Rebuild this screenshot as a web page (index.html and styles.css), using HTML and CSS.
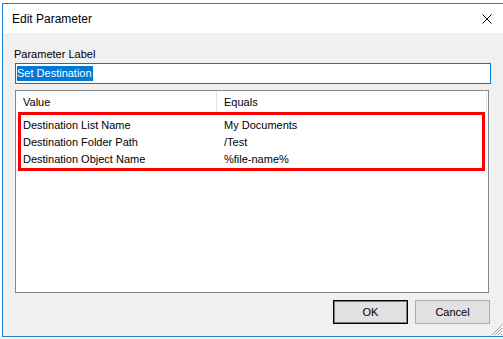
FILE: index.html
```html
<!DOCTYPE html>
<html lang="en">
<head>
  <meta charset="UTF-8" />
  <title>Edit Parameter</title>
  <link rel="stylesheet" href="styles.css">
</head>
<body>
  <div class="screen">
    <div class="window">
      <div class="titlebar">
        <span class="title">Edit Parameter</span>
        <svg class="close" width="10" height="10" viewBox="0 0 10 10">
          <path d="M0.5 0.5 L9.5 9.5 M9.5 0.5 L0.5 9.5" stroke="#000" stroke-width="1" />
        </svg>
      </div>

      <div class="client">
        <label class="field-label">Parameter Label</label>
        <div class="textbox"><span class="selected">Set Destination</span></div>

        <div class="listview">
          <div class="list-header">
            <div class="col col-value">Value</div>
            <div class="col col-equals">Equals</div>
          </div>
          <div class="list-rows">
            <div class="row">
              <div class="cell cell-value">Destination List Name</div>
              <div class="cell">My Documents</div>
            </div>
            <div class="row">
              <div class="cell cell-value">Destination Folder Path</div>
              <div class="cell">/Test</div>
            </div>
            <div class="row">
              <div class="cell cell-value">Destination Object Name</div>
              <div class="cell">%file-name%</div>
            </div>
          </div>
          <!-- annotation box drawn over the rows -->
          <div class="highlight"></div>
        </div>

        <div class="buttons">
          <button class="btn btn-default">OK</button>
          <button class="btn">Cancel</button>
        </div>

        <svg class="grip" width="13" height="13" viewBox="0 0 13 13">
          <path d="M12 2 L2 12 M12 5 L5 12 M12 8 L8 12 M12 11 L11 12" stroke="#a0a0a0" stroke-width="1" />
          <path d="M13 3 L3 13 M13 6 L6 13 M13 9 L9 13" stroke="#ffffff" stroke-width="1" />
        </svg>
      </div>
    </div>
  </div>
</body>
</html>
```

FILE: styles.css
```css
* {
  margin: 0;
  padding: 0;
  box-sizing: border-box;
}

body {
  background: #ffffff;
  font-family: 'Liberation Sans', Arial, sans-serif;
  font-size: 11px;
  color: #000000;
  width: 503px;
  height: 339px;
  overflow: hidden;
}

.screen {
  padding: 3px 0 0 2px;
  height: 339px;
}

/* Window frame */
.window {
  width: 501px;
  height: 334px;
  border: 1px solid #1883d7;
  border-right: none;
  display: flex;
  flex-direction: column;
}

.titlebar {
  height: 29px;
  background: #ffffff;
  display: flex;
  align-items: center;
  justify-content: space-between;
  padding: 1px 11px 0 9px;
}

.title {
  font-size: 12px;
  color: #000000;
}

.close {
  display: block;
}

/* Dialog body */
.client {
  position: relative;
  flex: 1;
  background: #f0f0f0;
  padding: 15px 13px 0 11px;
}

.field-label {
  display: block;
  line-height: 13px;
  height: 13px;
}

.textbox {
  margin: 2px 0 0 1px;
  width: 476px;
  height: 21px;
  border: 1px solid #0078d7;
  background: #ffffff;
  padding: 2px 1px;
}

.selected {
  display: inline-block;
  height: 15px;
  line-height: 15px;
  padding: 0 1px 0 0;
  background: #0078d7;
  color: #ffffff;
}

/* List view */
.listview {
  position: relative;
  margin: 6px 0 0 1px;
  width: 474px;
  height: 203px;
  border: 1px solid #828790;
  background: #ffffff;
}

.list-header {
  display: flex;
  height: 21px;
}

.col {
  line-height: 19px;
  padding: 2px 0 0 7px;
  border-right: 1px solid #e5e5e5;
}

.col-value {
  width: 201px;
}

.col-equals {
  width: 270px;
}

.list-rows {
  padding-top: 5px;
}

.row {
  display: flex;
  height: 17px;
  line-height: 17px;
}

.cell {
  padding-left: 7px;
}

.cell-value {
  width: 201px;
}

.highlight {
  position: absolute;
  left: 2px;
  top: 21px;
  width: 467px;
  height: 59px;
  border: 3px solid #ff0000;
}

/* Buttons */
.buttons {
  display: flex;
  justify-content: flex-end;
  gap: 7px;
  margin-top: 7px;
}

.btn {
  width: 75px;
  height: 24px;
  font-family: inherit;
  font-size: 11px;
  color: #000000;
  background: #e1e1e1;
  border: 1px solid #adadad;
}

.btn-default {
  border: 1px solid #000000;
  box-shadow: inset 0 0 0 1px #7a7a7a;
}

.grip {
  position: absolute;
  right: 0;
  bottom: 0;
  display: block;
}
```
